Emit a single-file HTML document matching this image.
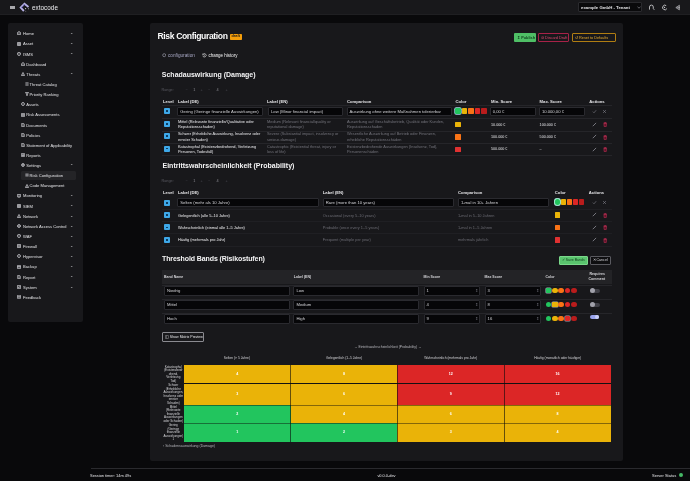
<!DOCTYPE html>
<html><head><meta charset="utf-8"><style>
html,body{margin:0;padding:0;width:690px;height:481px;overflow:hidden;background:#09090b;font-family:"Liberation Sans",sans-serif;}
body{position:relative;}
#root{position:absolute;left:0;top:0;width:690px;height:481px;will-change:transform;}
</style></head><body>
<div id="root"><div style="position:absolute;left:0px;top:0px;width:690px;height:14.8px;background:#18181b;border-bottom:0.8px solid #1f1f22;box-sizing:border-box"></div><div style="position:absolute;left:10px;top:5.6px;width:5px;height:0.75px;background:#a8a8ac"></div><div style="position:absolute;left:10px;top:7.0px;width:5px;height:0.75px;background:#a8a8ac"></div><div style="position:absolute;left:10px;top:8.4px;width:5px;height:0.75px;background:#a8a8ac"></div><svg style="position:absolute;left:0;top:0" width="34" height="14" viewBox="0 0 34 14"><path d="M28.5 6.9 L24.5 3.7 L20.7 7.6 L23.9 11.0" fill="none" stroke="#b6b0e4" stroke-width="1.9" stroke-linejoin="miter"/><circle cx="24.2" cy="5.2" r="0.75" fill="#23206a"/><circle cx="22.3" cy="7.3" r="0.75" fill="#23206a"/><circle cx="25.6" cy="8.6" r="0.6" fill="#d0d0d4"/><circle cx="28.5" cy="8.7" r="0.5" fill="#b8b8bc"/><circle cx="25.8" cy="11.2" r="0.45" fill="#9a9aa0"/></svg><div style="position:absolute;left:32px;top:5.35px;font-size:6.3px;line-height:6.3px;color:#ececef;font-weight:normal;white-space:nowrap;letter-spacing:0.05px">extocode</div><div style="position:absolute;left:577.7px;top:2.1px;width:64.1px;height:9.5px;background:#09090b;border:0.6px solid #2a2a2e;border-radius:1px;box-sizing:border-box"></div><div style="position:absolute;left:581px;top:5.85px;font-size:4.3px;line-height:4.3px;color:#e4e4e7;font-weight:bold;white-space:nowrap;">example GmbH - Tenant</div><svg style="position:absolute;left:636.5px;top:6px" width="4" height="3" viewBox="0 0 4 3"><path d="M0.5 0.8 L2 2.2 L3.5 0.8" fill="none" stroke="#a1a1aa" stroke-width="0.6"/></svg><svg style="position:absolute;left:644px;top:0" width="46" height="14" viewBox="0 0 46 14"><path d="M5.5 9.6 V7 A1.9 1.9 0 0 1 9.3 7 V8.6 L10.3 9.8" fill="none" stroke="#e4e4e7" stroke-width="0.75"/><path d="M22.2 5.6 A2.3 2.3 0 1 0 22.9 8.6" fill="none" stroke="#e4e4e7" stroke-width="0.8"/><circle cx="20.6" cy="7.3" r="0.6" fill="#e4e4e7"/><path d="M35.4 5.2 L31.8 7.6 L35.4 9.9 Z" fill="#55555a" stroke="#d4d4d8" stroke-width="0.55" stroke-linejoin="round"/><path d="M33.4 7.6 H36" stroke="#d4d4d8" stroke-width="0.45"/></svg><div style="position:absolute;left:8px;top:23px;width:75px;height:298.5px;background:#18181b;border-radius:2px"></div><svg style="position:absolute;left:16.80px;top:31.40px" width="4" height="4" viewBox="0 0 4 4"><path d="M0.4 1.6 L2 0.4 L3.6 1.6 V3.6 H0.4 Z" fill="rgba(200,200,205,0.35)" stroke="#dcdce0" stroke-width="0.6" stroke-linejoin="round"/></svg><div style="position:absolute;left:23px;top:32.25px;font-size:4.1px;line-height:4.1px;color:#e2e2e5;font-weight:normal;white-space:nowrap;">Home</div><div style="position:absolute;left:69.8px;top:31.10px;font-size:4.2px;line-height:4.2px;color:#d8d8dc;font-weight:normal;white-space:nowrap;">&#8964;</div><svg style="position:absolute;left:16.80px;top:41.54px" width="4" height="4" viewBox="0 0 4 4"><path d="M0.4 0.5 H3.6 V3.5 H0.4 Z M0.4 2 H3.6 M2 0.5 V3.5" fill="rgba(200,200,205,0.35)" stroke="#dcdce0" stroke-width="0.6" stroke-linejoin="round"/></svg><div style="position:absolute;left:23px;top:42.39px;font-size:4.1px;line-height:4.1px;color:#e2e2e5;font-weight:normal;white-space:nowrap;">Asset</div><div style="position:absolute;left:69.8px;top:41.24px;font-size:4.2px;line-height:4.2px;color:#d8d8dc;font-weight:normal;white-space:nowrap;">&#8964;</div><svg style="position:absolute;left:16.80px;top:51.68px" width="4" height="4" viewBox="0 0 4 4"><path d="M2 0.3 L3.6 1 V2.2 C3.6 3 2.8 3.5 2 3.7 C1.2 3.5 0.4 3 0.4 2.2 V1 Z" fill="rgba(200,200,205,0.35)" stroke="#dcdce0" stroke-width="0.6" stroke-linejoin="round"/></svg><div style="position:absolute;left:23px;top:52.53px;font-size:4.1px;line-height:4.1px;color:#e2e2e5;font-weight:normal;white-space:nowrap;">ISMS</div><div style="position:absolute;left:69.8px;top:52.88px;font-size:4.2px;line-height:4.2px;color:#d8d8dc;font-weight:normal;white-space:nowrap;">&#8963;</div><svg style="position:absolute;left:21.00px;top:61.82px" width="4" height="4" viewBox="0 0 4 4"><path d="M0.4 1.8 L2 0.4 L3.6 1.8 V3.6 H0.4 Z" fill="rgba(200,200,205,0.35)" stroke="#dcdce0" stroke-width="0.6" stroke-linejoin="round"/></svg><div style="position:absolute;left:26.3px;top:62.67px;font-size:4.1px;line-height:4.1px;color:#e2e2e5;font-weight:normal;white-space:nowrap;">Dashboard</div><svg style="position:absolute;left:21.00px;top:71.96px" width="4" height="4" viewBox="0 0 4 4"><path d="M2 0.4 L3.7 3.5 H0.3 Z" fill="rgba(200,200,205,0.35)" stroke="#dcdce0" stroke-width="0.6" stroke-linejoin="round"/></svg><div style="position:absolute;left:26.3px;top:72.81px;font-size:4.1px;line-height:4.1px;color:#e2e2e5;font-weight:normal;white-space:nowrap;">Threats</div><div style="position:absolute;left:69.8px;top:73.16px;font-size:4.2px;line-height:4.2px;color:#d8d8dc;font-weight:normal;white-space:nowrap;">&#8963;</div><svg style="position:absolute;left:24.70px;top:82.10px" width="4" height="4" viewBox="0 0 4 4"><path d="M0.4 0.8 H3.6 M0.4 2 H3.6 M0.4 3.2 H3.6" fill="rgba(200,200,205,0.35)" stroke="#dcdce0" stroke-width="0.6" stroke-linejoin="round"/></svg><div style="position:absolute;left:29.6px;top:82.95px;font-size:4.1px;line-height:4.1px;color:#e2e2e5;font-weight:normal;white-space:nowrap;">Threat Catalog</div><svg style="position:absolute;left:24.70px;top:92.24px" width="4" height="4" viewBox="0 0 4 4"><path d="M0.3 0.5 H3.7 L2.4 2 V3.5 H1.6 V2 Z" fill="rgba(200,200,205,0.35)" stroke="#dcdce0" stroke-width="0.6" stroke-linejoin="round"/></svg><div style="position:absolute;left:29.6px;top:93.09px;font-size:4.1px;line-height:4.1px;color:#e2e2e5;font-weight:normal;white-space:nowrap;">Priority Ranking</div><svg style="position:absolute;left:21.00px;top:102.38px" width="4" height="4" viewBox="0 0 4 4"><path d="M2 0.4 A1.6 1.6 0 1 1 1.99 0.4 Z" fill="rgba(200,200,205,0.35)" stroke="#dcdce0" stroke-width="0.6" stroke-linejoin="round"/></svg><div style="position:absolute;left:26.3px;top:103.23px;font-size:4.1px;line-height:4.1px;color:#e2e2e5;font-weight:normal;white-space:nowrap;">Assets</div><svg style="position:absolute;left:21.00px;top:112.52px" width="4" height="4" viewBox="0 0 4 4"><path d="M0.5 0.4 H3.5 V3.6 H0.5 Z M1.2 1.4 H2.8 M1.2 2.4 H2.8" fill="rgba(200,200,205,0.35)" stroke="#dcdce0" stroke-width="0.6" stroke-linejoin="round"/></svg><div style="position:absolute;left:26.3px;top:113.37px;font-size:4.1px;line-height:4.1px;color:#e2e2e5;font-weight:normal;white-space:nowrap;">Risk Assessments</div><svg style="position:absolute;left:21.00px;top:122.66px" width="4" height="4" viewBox="0 0 4 4"><path d="M0.7 0.3 H2.5 L3.3 1.1 V3.7 H0.7 Z" fill="rgba(200,200,205,0.35)" stroke="#dcdce0" stroke-width="0.6" stroke-linejoin="round"/></svg><div style="position:absolute;left:26.3px;top:123.51px;font-size:4.1px;line-height:4.1px;color:#e2e2e5;font-weight:normal;white-space:nowrap;">Documents</div><svg style="position:absolute;left:21.00px;top:132.80px" width="4" height="4" viewBox="0 0 4 4"><path d="M0.7 0.3 H2.5 L3.3 1.1 V3.7 H0.7 Z" fill="rgba(200,200,205,0.35)" stroke="#dcdce0" stroke-width="0.6" stroke-linejoin="round"/></svg><div style="position:absolute;left:26.3px;top:133.65px;font-size:4.1px;line-height:4.1px;color:#e2e2e5;font-weight:normal;white-space:nowrap;">Policies</div><svg style="position:absolute;left:21.00px;top:142.94px" width="4" height="4" viewBox="0 0 4 4"><path d="M0.7 0.3 H2.5 L3.3 1.1 V3.7 H0.7 Z" fill="rgba(200,200,205,0.35)" stroke="#dcdce0" stroke-width="0.6" stroke-linejoin="round"/></svg><div style="position:absolute;left:26.3px;top:143.79px;font-size:4.1px;line-height:4.1px;color:#e2e2e5;font-weight:normal;white-space:nowrap;">Statement of Applicability</div><svg style="position:absolute;left:21.00px;top:153.08px" width="4" height="4" viewBox="0 0 4 4"><path d="M0.6 0.3 H3.4 V3.7 H0.6 Z M1.3 2.8 V2 M2 2.8 V1.3 M2.7 2.8 V1.7" fill="rgba(200,200,205,0.35)" stroke="#dcdce0" stroke-width="0.6" stroke-linejoin="round"/></svg><div style="position:absolute;left:26.3px;top:153.93px;font-size:4.1px;line-height:4.1px;color:#e2e2e5;font-weight:normal;white-space:nowrap;">Reports</div><svg style="position:absolute;left:21.00px;top:163.22px" width="4" height="4" viewBox="0 0 4 4"><path d="M2 0.4 A1.6 1.6 0 1 1 1.99 0.4 Z M2 1.4 A0.6 0.6 0 1 1 1.99 1.4 Z" fill="rgba(200,200,205,0.35)" stroke="#dcdce0" stroke-width="0.6" stroke-linejoin="round"/></svg><div style="position:absolute;left:26.3px;top:164.07px;font-size:4.1px;line-height:4.1px;color:#e2e2e5;font-weight:normal;white-space:nowrap;">Settings</div><div style="position:absolute;left:69.8px;top:164.42px;font-size:4.2px;line-height:4.2px;color:#d8d8dc;font-weight:normal;white-space:nowrap;">&#8963;</div><div style="position:absolute;left:21.4px;top:170.56px;width:54.9px;height:9.8px;background:#242427;border-radius:1.5px"></div><svg style="position:absolute;left:24.70px;top:173.36px" width="4" height="4" viewBox="0 0 4 4"><path d="M0.4 1 H3.6 M0.4 2 H3.6 M0.4 3 H3.6" fill="rgba(200,200,205,0.35)" stroke="#dcdce0" stroke-width="0.6" stroke-linejoin="round"/></svg><div style="position:absolute;left:29.6px;top:174.21px;font-size:4.1px;line-height:4.1px;color:#e2e2e5;font-weight:normal;white-space:nowrap;">Risk Configuration</div><svg style="position:absolute;left:24.70px;top:183.50px" width="4" height="4" viewBox="0 0 4 4"><path d="M2 0.4 L3.7 3.5 H0.3 Z" fill="rgba(200,200,205,0.35)" stroke="#dcdce0" stroke-width="0.6" stroke-linejoin="round"/></svg><div style="position:absolute;left:29.6px;top:184.35px;font-size:4.1px;line-height:4.1px;color:#e2e2e5;font-weight:normal;white-space:nowrap;">Code Management</div><svg style="position:absolute;left:16.80px;top:193.64px" width="4" height="4" viewBox="0 0 4 4"><path d="M0.3 0.5 H3.7 V2.8 H0.3 Z M1.3 3.6 H2.7" fill="rgba(200,200,205,0.35)" stroke="#dcdce0" stroke-width="0.6" stroke-linejoin="round"/></svg><div style="position:absolute;left:23px;top:194.49px;font-size:4.1px;line-height:4.1px;color:#e2e2e5;font-weight:normal;white-space:nowrap;">Monitoring</div><div style="position:absolute;left:69.8px;top:193.34px;font-size:4.2px;line-height:4.2px;color:#d8d8dc;font-weight:normal;white-space:nowrap;">&#8964;</div><svg style="position:absolute;left:16.80px;top:203.78px" width="4" height="4" viewBox="0 0 4 4"><path d="M0.4 0.4 H3.6 V3.6 H0.4 Z M0.4 2 H3.6 M2 0.4 V3.6" fill="rgba(200,200,205,0.35)" stroke="#dcdce0" stroke-width="0.6" stroke-linejoin="round"/></svg><div style="position:absolute;left:23px;top:204.63px;font-size:4.1px;line-height:4.1px;color:#e2e2e5;font-weight:normal;white-space:nowrap;">SIEM</div><div style="position:absolute;left:69.8px;top:203.48px;font-size:4.2px;line-height:4.2px;color:#d8d8dc;font-weight:normal;white-space:nowrap;">&#8964;</div><svg style="position:absolute;left:16.80px;top:213.92px" width="4" height="4" viewBox="0 0 4 4"><path d="M2 0.4 L3.7 3.5 H0.3 Z" fill="rgba(200,200,205,0.35)" stroke="#dcdce0" stroke-width="0.6" stroke-linejoin="round"/></svg><div style="position:absolute;left:23px;top:214.77px;font-size:4.1px;line-height:4.1px;color:#e2e2e5;font-weight:normal;white-space:nowrap;">Network</div><div style="position:absolute;left:69.8px;top:213.62px;font-size:4.2px;line-height:4.2px;color:#d8d8dc;font-weight:normal;white-space:nowrap;">&#8964;</div><svg style="position:absolute;left:16.80px;top:224.06px" width="4" height="4" viewBox="0 0 4 4"><path d="M2 0.4 A1.6 1.6 0 1 1 1.99 0.4 Z M0.4 2 H3.6" fill="rgba(200,200,205,0.35)" stroke="#dcdce0" stroke-width="0.6" stroke-linejoin="round"/></svg><div style="position:absolute;left:23px;top:224.91px;font-size:4.1px;line-height:4.1px;color:#e2e2e5;font-weight:normal;white-space:nowrap;">Network Access Control</div><div style="position:absolute;left:69.8px;top:223.76px;font-size:4.2px;line-height:4.2px;color:#d8d8dc;font-weight:normal;white-space:nowrap;">&#8964;</div><svg style="position:absolute;left:16.80px;top:234.20px" width="4" height="4" viewBox="0 0 4 4"><path d="M2 0.3 L3.6 1 V2.2 C3.6 3 2.8 3.5 2 3.7 C1.2 3.5 0.4 3 0.4 2.2 V1 Z" fill="rgba(200,200,205,0.35)" stroke="#dcdce0" stroke-width="0.6" stroke-linejoin="round"/></svg><div style="position:absolute;left:23px;top:235.05px;font-size:4.1px;line-height:4.1px;color:#e2e2e5;font-weight:normal;white-space:nowrap;">WAF</div><div style="position:absolute;left:69.8px;top:233.90px;font-size:4.2px;line-height:4.2px;color:#d8d8dc;font-weight:normal;white-space:nowrap;">&#8964;</div><svg style="position:absolute;left:16.80px;top:244.34px" width="4" height="4" viewBox="0 0 4 4"><path d="M0.3 0.5 H3.7 V3.5 H0.3 Z M0.3 2 H3.7" fill="rgba(200,200,205,0.35)" stroke="#dcdce0" stroke-width="0.6" stroke-linejoin="round"/></svg><div style="position:absolute;left:23px;top:245.19px;font-size:4.1px;line-height:4.1px;color:#e2e2e5;font-weight:normal;white-space:nowrap;">Firewall</div><div style="position:absolute;left:69.8px;top:244.04px;font-size:4.2px;line-height:4.2px;color:#d8d8dc;font-weight:normal;white-space:nowrap;">&#8964;</div><svg style="position:absolute;left:16.80px;top:254.48px" width="4" height="4" viewBox="0 0 4 4"><path d="M2 0.4 A1.6 1.6 0 1 1 1.99 0.4 Z" fill="rgba(200,200,205,0.35)" stroke="#dcdce0" stroke-width="0.6" stroke-linejoin="round"/></svg><div style="position:absolute;left:23px;top:255.33px;font-size:4.1px;line-height:4.1px;color:#e2e2e5;font-weight:normal;white-space:nowrap;">Hypervisor</div><div style="position:absolute;left:69.8px;top:254.18px;font-size:4.2px;line-height:4.2px;color:#d8d8dc;font-weight:normal;white-space:nowrap;">&#8964;</div><svg style="position:absolute;left:16.80px;top:264.62px" width="4" height="4" viewBox="0 0 4 4"><path d="M0.5 0.4 H3.5 V3.6 H0.5 Z M0.5 1.6 H3.5" fill="rgba(200,200,205,0.35)" stroke="#dcdce0" stroke-width="0.6" stroke-linejoin="round"/></svg><div style="position:absolute;left:23px;top:265.47px;font-size:4.1px;line-height:4.1px;color:#e2e2e5;font-weight:normal;white-space:nowrap;">Backup</div><div style="position:absolute;left:69.8px;top:264.32px;font-size:4.2px;line-height:4.2px;color:#d8d8dc;font-weight:normal;white-space:nowrap;">&#8964;</div><svg style="position:absolute;left:16.80px;top:274.76px" width="4" height="4" viewBox="0 0 4 4"><path d="M0.7 0.3 H2.5 L3.3 1.1 V3.7 H0.7 Z" fill="rgba(200,200,205,0.35)" stroke="#dcdce0" stroke-width="0.6" stroke-linejoin="round"/></svg><div style="position:absolute;left:23px;top:275.61px;font-size:4.1px;line-height:4.1px;color:#e2e2e5;font-weight:normal;white-space:nowrap;">Report</div><div style="position:absolute;left:69.8px;top:274.46px;font-size:4.2px;line-height:4.2px;color:#d8d8dc;font-weight:normal;white-space:nowrap;">&#8964;</div><svg style="position:absolute;left:16.80px;top:284.90px" width="4" height="4" viewBox="0 0 4 4"><path d="M0.4 0.4 H3.6 V3.6 H0.4 Z M1 2 L1.8 2.7 L3 1.2" fill="rgba(200,200,205,0.35)" stroke="#dcdce0" stroke-width="0.6" stroke-linejoin="round"/></svg><div style="position:absolute;left:23px;top:285.75px;font-size:4.1px;line-height:4.1px;color:#e2e2e5;font-weight:normal;white-space:nowrap;">System</div><div style="position:absolute;left:69.8px;top:284.60px;font-size:4.2px;line-height:4.2px;color:#d8d8dc;font-weight:normal;white-space:nowrap;">&#8964;</div><svg style="position:absolute;left:16.80px;top:295.04px" width="4" height="4" viewBox="0 0 4 4"><path d="M0.3 0.7 H3.7 V3.3 H0.3 Z M0.3 0.7 L2 2.1 L3.7 0.7" fill="rgba(200,200,205,0.35)" stroke="#dcdce0" stroke-width="0.6" stroke-linejoin="round"/></svg><div style="position:absolute;left:23px;top:295.89px;font-size:4.1px;line-height:4.1px;color:#e2e2e5;font-weight:normal;white-space:nowrap;">Feedback</div><div style="position:absolute;left:150px;top:22.5px;width:473px;height:438px;background:#18181b;border-radius:2px"></div><div style="position:absolute;left:157.5px;top:31.30px;font-size:8.6px;line-height:10px;color:#fafafa;font-weight:bold;white-space:nowrap;letter-spacing:-0.38px">Risk Configuration</div><div style="position:absolute;left:229.8px;top:33.8px;width:12.5px;height:5.8px;background:#f59e0b;border-radius:0.8px"></div><div style="position:absolute;left:231.5px;top:34.90px;font-size:3.8px;line-height:3.8px;color:#1c1917;font-weight:bold;white-space:nowrap;">draft</div><div style="position:absolute;left:514px;top:33.2px;width:22.3px;height:8.7px;background:#4fbf66;border-radius:1px"></div><div style="position:absolute;left:517.2px;top:37.00px;font-size:3.8px;line-height:3.8px;color:#0f3d1c;font-weight:bold;white-space:nowrap;">&#8613; Publish</div><div style="position:absolute;left:538px;top:33.2px;width:31.3px;height:8.7px;border:0.6px solid #a82248;border-radius:1px;box-sizing:border-box"></div><div style="position:absolute;left:541px;top:37.00px;font-size:3.8px;line-height:3.8px;color:#e04870;font-weight:normal;white-space:nowrap;">&#8856; Discard Draft</div><div style="position:absolute;left:571.6px;top:33.2px;width:44.2px;height:8.7px;border:0.6px solid #b07d12;border-radius:1px;box-sizing:border-box"></div><div style="position:absolute;left:575px;top:37.00px;font-size:3.8px;line-height:3.8px;color:#e8ac30;font-weight:normal;white-space:nowrap;">&#8634; Reset to Defaults</div><svg style="position:absolute;left:161.5px;top:53.3px" width="4.4" height="4.4" viewBox="0 0 4.4 4.4"><circle cx="2.2" cy="2.2" r="1.5" fill="none" stroke="#9898a8" stroke-width="0.7"/></svg><div style="position:absolute;left:168px;top:54.15px;font-size:4.7px;line-height:4.7px;color:#a8a8c4;font-weight:normal;white-space:nowrap;">configuration</div><svg style="position:absolute;left:202.3px;top:53.2px" width="4.6" height="4.6" viewBox="0 0 4.6 4.6"><path d="M1 1.4 A1.7 1.7 0 1 1 0.8 2.8" fill="none" stroke="#e4e4e7" stroke-width="0.65"/><path d="M0.6 0.6 V1.7 H1.7" fill="none" stroke="#e4e4e7" stroke-width="0.55"/><path d="M2.3 1.4 V2.4 L3 2.9" fill="none" stroke="#e4e4e7" stroke-width="0.5"/></svg><div style="position:absolute;left:208.5px;top:54.27px;font-size:4.45px;line-height:4.45px;color:#f4f4f5;font-weight:normal;white-space:nowrap;">change history</div><div style="position:absolute;left:161.8px;top:71.00px;font-size:7px;line-height:8px;color:#f4f4f5;font-weight:bold;white-space:nowrap;">Schadauswirkung (Damage)</div><div style="position:absolute;left:161.5px;top:89.00px;font-size:3.8px;line-height:3.8px;color:#5a5a62;font-weight:normal;white-space:nowrap;">Range:</div><div style="position:absolute;left:185.5px;top:89.00px;font-size:3.8px;line-height:3.8px;color:#4a4a52;font-weight:normal;white-space:nowrap;">&minus;</div><div style="position:absolute;left:193.3px;top:89.00px;font-size:3.8px;line-height:3.8px;color:#8a8a92;font-weight:normal;white-space:nowrap;">1</div><div style="position:absolute;left:200.5px;top:89.00px;font-size:3.8px;line-height:3.8px;color:#4a4a52;font-weight:normal;white-space:nowrap;">+</div><div style="position:absolute;left:208px;top:89.00px;font-size:3.8px;line-height:3.8px;color:#4a4a52;font-weight:normal;white-space:nowrap;">&minus;</div><div style="position:absolute;left:216.5px;top:89.00px;font-size:3.8px;line-height:3.8px;color:#8a8a92;font-weight:normal;white-space:nowrap;">4</div><div style="position:absolute;left:225.5px;top:89.00px;font-size:3.8px;line-height:3.8px;color:#4a4a52;font-weight:normal;white-space:nowrap;">+</div><div style="position:absolute;left:163px;top:99.50px;font-size:4.2px;line-height:4.2px;color:#e4e4e7;font-weight:bold;white-space:nowrap;">Level</div><div style="position:absolute;left:178px;top:99.50px;font-size:4.2px;line-height:4.2px;color:#e4e4e7;font-weight:bold;white-space:nowrap;">Label (DE)</div><div style="position:absolute;left:267px;top:99.50px;font-size:4.2px;line-height:4.2px;color:#e4e4e7;font-weight:bold;white-space:nowrap;">Label (EN)</div><div style="position:absolute;left:347px;top:99.50px;font-size:4.2px;line-height:4.2px;color:#e4e4e7;font-weight:bold;white-space:nowrap;">Comparison</div><div style="position:absolute;left:455.5px;top:99.50px;font-size:4.2px;line-height:4.2px;color:#e4e4e7;font-weight:bold;white-space:nowrap;">Color</div><div style="position:absolute;left:491px;top:99.50px;font-size:4.2px;line-height:4.2px;color:#e4e4e7;font-weight:bold;white-space:nowrap;">Min. Score</div><div style="position:absolute;left:539.6px;top:99.50px;font-size:4.2px;line-height:4.2px;color:#e4e4e7;font-weight:bold;white-space:nowrap;">Max. Score</div><div style="position:absolute;left:589.3px;top:99.50px;font-size:4.2px;line-height:4.2px;color:#e4e4e7;font-weight:bold;white-space:nowrap;">Actions</div><div style="position:absolute;left:162px;top:105.3px;width:450px;height:0.5px;background:#252529"></div><div style="position:absolute;left:164px;top:108.2px;width:6.2px;height:6.2px;background:#3ea8e8;border-radius:0.9px"></div><div style="position:absolute;left:166.4px;top:110.4px;width:1.5px;height:1.8px;background:#0c3a5e;border-radius:0.3px"></div><div style="position:absolute;left:177.3px;top:106.5px;width:85.5px;height:9.5px;background:#060608;border:0.5px solid #2a2a2f;border-radius:1px;box-sizing:border-box"></div><div style="position:absolute;left:180.3px;top:109.85px;font-size:4.2px;line-height:4.2px;color:#d4d4d8;font-weight:normal;white-space:nowrap;">Gering (Geringe finanzielle Auswirkungen)</div><div style="position:absolute;left:268px;top:106.5px;width:75px;height:9.5px;background:#060608;border:0.5px solid #2a2a2f;border-radius:1px;box-sizing:border-box"></div><div style="position:absolute;left:271px;top:109.85px;font-size:4.2px;line-height:4.2px;color:#d4d4d8;font-weight:normal;white-space:nowrap;">Low (Minor financial impact)</div><div style="position:absolute;left:346.5px;top:106.5px;width:105.5px;height:9.5px;background:#060608;border:0.5px solid #2a2a2f;border-radius:1px;box-sizing:border-box"></div><div style="position:absolute;left:349.5px;top:109.85px;font-size:4.2px;line-height:4.2px;color:#d4d4d8;font-weight:normal;white-space:nowrap;">Auswirkung ohne weitere Ma&szlig;nahmen tolerierbar</div><div style="position:absolute;left:455.4px;top:108.3px;width:5.5px;height:5.5px;background:#22c55e;border-radius:0.8px;border-radius:1.2px;box-shadow:0 0 0 0.7px #a5d8e6"></div><div style="position:absolute;left:461.9px;top:108.3px;width:5.5px;height:5.5px;background:#eab308;border-radius:0.8px"></div><div style="position:absolute;left:468.4px;top:108.3px;width:5.5px;height:5.5px;background:#f97316;border-radius:0.8px"></div><div style="position:absolute;left:474.9px;top:108.3px;width:5.5px;height:5.5px;background:#dc2626;border-radius:0.8px"></div><div style="position:absolute;left:481.4px;top:108.3px;width:5.5px;height:5.5px;background:#b91c1c;border-radius:0.8px"></div><div style="position:absolute;left:489.8px;top:106.5px;width:46.2px;height:9.5px;background:#060608;border:0.5px solid #2a2a2f;border-radius:1px;box-sizing:border-box"></div><div style="position:absolute;left:492.8px;top:109.85px;font-size:4.2px;line-height:4.2px;color:#d4d4d8;font-weight:normal;white-space:nowrap;">0,00 &euro;</div><div style="position:absolute;left:538.9px;top:106.5px;width:45.9px;height:9.5px;background:#060608;border:0.5px solid #2a2a2f;border-radius:1px;box-sizing:border-box"></div><div style="position:absolute;left:541.9px;top:109.85px;font-size:4.2px;line-height:4.2px;color:#d4d4d8;font-weight:normal;white-space:nowrap;">10.000,00 &euro;</div><svg style="position:absolute;left:591.5px;top:108.80px" width="5" height="5" viewBox="0 0 5 5"><path d="M0.8 2.6 L2 3.8 L4.2 1.2" fill="none" stroke="#8a8a92" stroke-width="0.55"/></svg><svg style="position:absolute;left:602px;top:108.80px" width="5" height="5" viewBox="0 0 5 5"><path d="M1 1 L4 4 M4 1 L1 4" fill="none" stroke="#8a8a92" stroke-width="0.55"/></svg><div style="position:absolute;left:162px;top:118px;width:450px;height:0.5px;background:#252529"></div><div style="position:absolute;left:164px;top:120.80000000000001px;width:6.2px;height:6.2px;background:#3ea8e8;border-radius:0.9px"></div><div style="position:absolute;left:166.4px;top:123.00000000000001px;width:1.5px;height:1.8px;background:#0c3a5e;border-radius:0.3px"></div><div style="position:absolute;left:178px;top:119.85px;font-size:3.9px;line-height:3.9px;color:#ececef;font-weight:normal;white-space:nowrap;">Mittel (Relevante finanzielle/Qualitative oder</div><div style="position:absolute;left:178px;top:125.25px;font-size:3.9px;line-height:3.9px;color:#ececef;font-weight:normal;white-space:nowrap;">Reputationsschaden)</div><div style="position:absolute;left:267px;top:119.85px;font-size:3.9px;line-height:3.9px;color:#74747c;font-weight:normal;white-space:nowrap;">Medium (Relevant financial/quality or</div><div style="position:absolute;left:267px;top:125.25px;font-size:3.9px;line-height:3.9px;color:#74747c;font-weight:normal;white-space:nowrap;">reputational damage)</div><div style="position:absolute;left:347px;top:119.85px;font-size:3.9px;line-height:3.9px;color:#74747c;font-weight:normal;white-space:nowrap;">Auswirkung auf Gesch&auml;ftsbetrieb, Qualit&auml;t oder Kunden,</div><div style="position:absolute;left:347px;top:125.25px;font-size:3.9px;line-height:3.9px;color:#74747c;font-weight:normal;white-space:nowrap;">Reputationsschaden</div><div style="position:absolute;left:455px;top:121.80000000000001px;width:5.5px;height:5.5px;background:#eab308;border-radius:0.5px"></div><div style="position:absolute;left:491px;top:123.55px;font-size:3.7px;line-height:3.7px;color:#e4e4e7;font-weight:normal;white-space:nowrap;">10.000 &euro;</div><div style="position:absolute;left:539.6px;top:123.55px;font-size:3.7px;line-height:3.7px;color:#e4e4e7;font-weight:normal;white-space:nowrap;">100.000 &euro;</div><svg style="position:absolute;left:591.8px;top:122.00px" width="5" height="5" viewBox="0 0 5 5"><path d="M0.9 4.1 L4.1 0.9" fill="none" stroke="#a1a1aa" stroke-width="0.7"/><path d="M0.7 4.3 L1.2 3.6" stroke="#71717a" stroke-width="0.5"/></svg><svg style="position:absolute;left:602.70px;top:122.20px" width="4.4" height="5" viewBox="0 0 4.4 5"><path d="M0.4 1.1 H4 M1.6 1.1 V0.5 H2.8 V1.1 M0.9 1.5 L1.1 4.5 H3.3 L3.5 1.5 Z" fill="#5a1326" stroke="#c8325a" stroke-width="0.55"/></svg><div style="position:absolute;left:162px;top:130.5px;width:450px;height:0.5px;background:#252529"></div><div style="position:absolute;left:164px;top:133.20000000000002px;width:6.2px;height:6.2px;background:#3ea8e8;border-radius:0.9px"></div><div style="position:absolute;left:166.4px;top:135.4px;width:1.5px;height:1.8px;background:#0c3a5e;border-radius:0.3px"></div><div style="position:absolute;left:178px;top:132.25px;font-size:3.9px;line-height:3.9px;color:#ececef;font-weight:normal;white-space:nowrap;">Schwer (Erhebliche Auswirkung, Insolvenz oder</div><div style="position:absolute;left:178px;top:137.65px;font-size:3.9px;line-height:3.9px;color:#ececef;font-weight:normal;white-space:nowrap;">ernster Schaden)</div><div style="position:absolute;left:267px;top:132.25px;font-size:3.9px;line-height:3.9px;color:#74747c;font-weight:normal;white-space:nowrap;">Severe (Substantial impact, insolvency or</div><div style="position:absolute;left:267px;top:137.65px;font-size:3.9px;line-height:3.9px;color:#74747c;font-weight:normal;white-space:nowrap;">serious damage)</div><div style="position:absolute;left:347px;top:132.25px;font-size:3.9px;line-height:3.9px;color:#74747c;font-weight:normal;white-space:nowrap;">Wesentliche Auswirkung auf Betrieb oder Finanzen,</div><div style="position:absolute;left:347px;top:137.65px;font-size:3.9px;line-height:3.9px;color:#74747c;font-weight:normal;white-space:nowrap;">erhebliche Reputationssch&auml;den</div><div style="position:absolute;left:455px;top:134.20000000000002px;width:5.5px;height:5.5px;background:#f97316;border-radius:0.5px"></div><div style="position:absolute;left:491px;top:135.95px;font-size:3.7px;line-height:3.7px;color:#e4e4e7;font-weight:normal;white-space:nowrap;">100.000 &euro;</div><div style="position:absolute;left:539.6px;top:135.95px;font-size:3.7px;line-height:3.7px;color:#e4e4e7;font-weight:normal;white-space:nowrap;">500.000 &euro;</div><svg style="position:absolute;left:591.8px;top:134.40px" width="5" height="5" viewBox="0 0 5 5"><path d="M0.9 4.1 L4.1 0.9" fill="none" stroke="#a1a1aa" stroke-width="0.7"/><path d="M0.7 4.3 L1.2 3.6" stroke="#71717a" stroke-width="0.5"/></svg><svg style="position:absolute;left:602.70px;top:134.60px" width="4.4" height="5" viewBox="0 0 4.4 5"><path d="M0.4 1.1 H4 M1.6 1.1 V0.5 H2.8 V1.1 M0.9 1.5 L1.1 4.5 H3.3 L3.5 1.5 Z" fill="#5a1326" stroke="#c8325a" stroke-width="0.55"/></svg><div style="position:absolute;left:162px;top:142.9px;width:450px;height:0.5px;background:#252529"></div><div style="position:absolute;left:164px;top:145.5px;width:6.2px;height:6.2px;background:#3ea8e8;border-radius:0.9px"></div><div style="position:absolute;left:166.4px;top:147.7px;width:1.5px;height:1.8px;background:#0c3a5e;border-radius:0.3px"></div><div style="position:absolute;left:178px;top:144.55px;font-size:3.9px;line-height:3.9px;color:#ececef;font-weight:normal;white-space:nowrap;">Katastrophal (Existenzbedrohend, Verletzung</div><div style="position:absolute;left:178px;top:149.95px;font-size:3.9px;line-height:3.9px;color:#ececef;font-weight:normal;white-space:nowrap;">Personen, Todesfall)</div><div style="position:absolute;left:267px;top:144.55px;font-size:3.9px;line-height:3.9px;color:#74747c;font-weight:normal;white-space:nowrap;">Catastrophic (Existential threat, injury or</div><div style="position:absolute;left:267px;top:149.95px;font-size:3.9px;line-height:3.9px;color:#74747c;font-weight:normal;white-space:nowrap;">loss of life)</div><div style="position:absolute;left:347px;top:144.55px;font-size:3.9px;line-height:3.9px;color:#74747c;font-weight:normal;white-space:nowrap;">Existenzbedrohende Auswirkungen (Insolvenz, Tod),</div><div style="position:absolute;left:347px;top:149.95px;font-size:3.9px;line-height:3.9px;color:#74747c;font-weight:normal;white-space:nowrap;">Personensch&auml;den</div><div style="position:absolute;left:455px;top:146.5px;width:5.5px;height:5.5px;background:#e03131;border-radius:0.5px"></div><div style="position:absolute;left:491px;top:148.25px;font-size:3.7px;line-height:3.7px;color:#e4e4e7;font-weight:normal;white-space:nowrap;">500.000 &euro;</div><div style="position:absolute;left:539.6px;top:148.25px;font-size:3.7px;line-height:3.7px;color:#e4e4e7;font-weight:normal;white-space:nowrap;">&ndash;</div><svg style="position:absolute;left:591.8px;top:146.70px" width="5" height="5" viewBox="0 0 5 5"><path d="M0.9 4.1 L4.1 0.9" fill="none" stroke="#a1a1aa" stroke-width="0.7"/><path d="M0.7 4.3 L1.2 3.6" stroke="#71717a" stroke-width="0.5"/></svg><svg style="position:absolute;left:602.70px;top:146.90px" width="4.4" height="5" viewBox="0 0 4.4 5"><path d="M0.4 1.1 H4 M1.6 1.1 V0.5 H2.8 V1.1 M0.9 1.5 L1.1 4.5 H3.3 L3.5 1.5 Z" fill="#5a1326" stroke="#c8325a" stroke-width="0.55"/></svg><div style="position:absolute;left:162px;top:155.2px;width:450px;height:0.5px;background:#252529"></div><div style="position:absolute;left:162.5px;top:162.00px;font-size:7px;line-height:8px;color:#f4f4f5;font-weight:bold;white-space:nowrap;">Eintrittswahrscheinlichkeit (Probability)</div><div style="position:absolute;left:161.5px;top:180.40px;font-size:3.8px;line-height:3.8px;color:#5a5a62;font-weight:normal;white-space:nowrap;">Range:</div><div style="position:absolute;left:185.5px;top:180.40px;font-size:3.8px;line-height:3.8px;color:#4a4a52;font-weight:normal;white-space:nowrap;">&minus;</div><div style="position:absolute;left:193.3px;top:180.40px;font-size:3.8px;line-height:3.8px;color:#8a8a92;font-weight:normal;white-space:nowrap;">1</div><div style="position:absolute;left:200.5px;top:180.40px;font-size:3.8px;line-height:3.8px;color:#4a4a52;font-weight:normal;white-space:nowrap;">+</div><div style="position:absolute;left:208px;top:180.40px;font-size:3.8px;line-height:3.8px;color:#4a4a52;font-weight:normal;white-space:nowrap;">&minus;</div><div style="position:absolute;left:216.5px;top:180.40px;font-size:3.8px;line-height:3.8px;color:#8a8a92;font-weight:normal;white-space:nowrap;">4</div><div style="position:absolute;left:225.5px;top:180.40px;font-size:3.8px;line-height:3.8px;color:#4a4a52;font-weight:normal;white-space:nowrap;">+</div><div style="position:absolute;left:163px;top:191.10px;font-size:4.2px;line-height:4.2px;color:#e4e4e7;font-weight:bold;white-space:nowrap;">Level</div><div style="position:absolute;left:178px;top:191.10px;font-size:4.2px;line-height:4.2px;color:#e4e4e7;font-weight:bold;white-space:nowrap;">Label (DE)</div><div style="position:absolute;left:322.8px;top:191.10px;font-size:4.2px;line-height:4.2px;color:#e4e4e7;font-weight:bold;white-space:nowrap;">Label (EN)</div><div style="position:absolute;left:457.9px;top:191.10px;font-size:4.2px;line-height:4.2px;color:#e4e4e7;font-weight:bold;white-space:nowrap;">Comparison</div><div style="position:absolute;left:554.8px;top:191.10px;font-size:4.2px;line-height:4.2px;color:#e4e4e7;font-weight:bold;white-space:nowrap;">Color</div><div style="position:absolute;left:588.8px;top:191.10px;font-size:4.2px;line-height:4.2px;color:#e4e4e7;font-weight:bold;white-space:nowrap;">Actions</div><div style="position:absolute;left:164px;top:199.6px;width:6.2px;height:6.2px;background:#3ea8e8;border-radius:0.9px"></div><div style="position:absolute;left:166.4px;top:201.79999999999998px;width:1.5px;height:1.8px;background:#0c3a5e;border-radius:0.3px"></div><div style="position:absolute;left:177.3px;top:197.8px;width:141.5px;height:9.4px;background:#060608;border:0.5px solid #2a2a2f;border-radius:1px;box-sizing:border-box"></div><div style="position:absolute;left:180.3px;top:201.10px;font-size:4.2px;line-height:4.2px;color:#d4d4d8;font-weight:normal;white-space:nowrap;">Selten (mehr als 10 Jahre)</div><div style="position:absolute;left:322.8px;top:197.8px;width:131px;height:9.4px;background:#060608;border:0.5px solid #2a2a2f;border-radius:1px;box-sizing:border-box"></div><div style="position:absolute;left:325.8px;top:201.10px;font-size:4.2px;line-height:4.2px;color:#d4d4d8;font-weight:normal;white-space:nowrap;">Rare (more than 10 years)</div><div style="position:absolute;left:457.9px;top:197.8px;width:91.4px;height:9.4px;background:#060608;border:0.5px solid #2a2a2f;border-radius:1px;box-sizing:border-box"></div><div style="position:absolute;left:460.9px;top:201.10px;font-size:4.2px;line-height:4.2px;color:#d4d4d8;font-weight:normal;white-space:nowrap;">1-mal in 10+ Jahren</div><div style="position:absolute;left:554.5px;top:199.4px;width:5.9px;height:5.9px;background:#22c55e;border-radius:0.8px;border-radius:1.2px;box-shadow:0 0 0 0.7px #a5d8e6"></div><div style="position:absolute;left:560.5px;top:199.4px;width:5.9px;height:5.9px;background:#eab308;border-radius:0.8px"></div><div style="position:absolute;left:566.5px;top:199.4px;width:5.9px;height:5.9px;background:#f97316;border-radius:0.8px"></div><div style="position:absolute;left:572.5px;top:199.4px;width:5.9px;height:5.9px;background:#dc2626;border-radius:0.8px"></div><div style="position:absolute;left:578.5px;top:199.4px;width:5.9px;height:5.9px;background:#b91c1c;border-radius:0.8px"></div><div style="position:absolute;left:554.5px;top:199.4px;width:5.9px;height:5.9px;background:#22c55e;border-radius:50%;box-shadow:0 0 0 0.8px #a7f3d0"></div><svg style="position:absolute;left:591.5px;top:199.90px" width="5" height="5" viewBox="0 0 5 5"><path d="M0.8 2.6 L2 3.8 L4.2 1.2" fill="none" stroke="#8a8a92" stroke-width="0.55"/></svg><svg style="position:absolute;left:602px;top:199.90px" width="5" height="5" viewBox="0 0 5 5"><path d="M1 1 L4 4 M4 1 L1 4" fill="none" stroke="#8a8a92" stroke-width="0.55"/></svg><div style="position:absolute;left:162px;top:209.4px;width:450px;height:0.4px;background:#1f1f23"></div><div style="position:absolute;left:164px;top:211.8px;width:6.2px;height:6.2px;background:#3ea8e8;border-radius:0.9px"></div><div style="position:absolute;left:166.4px;top:214.0px;width:1.5px;height:1.8px;background:#0c3a5e;border-radius:0.3px"></div><div style="position:absolute;left:178px;top:213.55px;font-size:3.9px;line-height:3.9px;color:#f0f0f2;font-weight:normal;white-space:nowrap;">Gelegentlich (alle 5&ndash;10 Jahre)</div><div style="position:absolute;left:322.8px;top:213.55px;font-size:3.9px;line-height:3.9px;color:#6b6b73;font-weight:normal;white-space:nowrap;">Occasional (every 5&ndash;10 years)</div><div style="position:absolute;left:457.9px;top:213.55px;font-size:3.9px;line-height:3.9px;color:#6b6b73;font-weight:normal;white-space:nowrap;">1-mal in 5&ndash;10 Jahren</div><div style="position:absolute;left:554.5px;top:212.20000000000002px;width:5.8px;height:5.8px;background:#eab308;border-radius:0.5px"></div><svg style="position:absolute;left:591.8px;top:212.40px" width="5" height="5" viewBox="0 0 5 5"><path d="M0.9 4.1 L4.1 0.9" fill="none" stroke="#a1a1aa" stroke-width="0.7"/><path d="M0.7 4.3 L1.2 3.6" stroke="#71717a" stroke-width="0.5"/></svg><svg style="position:absolute;left:602.70px;top:212.60px" width="4.4" height="5" viewBox="0 0 4.4 5"><path d="M0.4 1.1 H4 M1.6 1.1 V0.5 H2.8 V1.1 M0.9 1.5 L1.1 4.5 H3.3 L3.5 1.5 Z" fill="#5a1326" stroke="#c8325a" stroke-width="0.55"/></svg><div style="position:absolute;left:162px;top:220.8px;width:450px;height:0.4px;background:#1f1f23"></div><div style="position:absolute;left:164px;top:224.3px;width:6.2px;height:6.2px;background:#3ea8e8;border-radius:0.9px"></div><div style="position:absolute;left:166.4px;top:226.5px;width:1.5px;height:1.8px;background:#0c3a5e;border-radius:0.3px"></div><div style="position:absolute;left:178px;top:226.05px;font-size:3.9px;line-height:3.9px;color:#f0f0f2;font-weight:normal;white-space:nowrap;">Wahrscheinlich (einmal alle 1&ndash;5 Jahre)</div><div style="position:absolute;left:322.8px;top:226.05px;font-size:3.9px;line-height:3.9px;color:#6b6b73;font-weight:normal;white-space:nowrap;">Probable (once every 1&ndash;5 years)</div><div style="position:absolute;left:457.9px;top:226.05px;font-size:3.9px;line-height:3.9px;color:#6b6b73;font-weight:normal;white-space:nowrap;">1-mal in 1&ndash;5 Jahren</div><div style="position:absolute;left:554.5px;top:224.70000000000002px;width:5.8px;height:5.8px;background:#f97316;border-radius:0.5px"></div><svg style="position:absolute;left:591.8px;top:224.90px" width="5" height="5" viewBox="0 0 5 5"><path d="M0.9 4.1 L4.1 0.9" fill="none" stroke="#a1a1aa" stroke-width="0.7"/><path d="M0.7 4.3 L1.2 3.6" stroke="#71717a" stroke-width="0.5"/></svg><svg style="position:absolute;left:602.70px;top:225.10px" width="4.4" height="5" viewBox="0 0 4.4 5"><path d="M0.4 1.1 H4 M1.6 1.1 V0.5 H2.8 V1.1 M0.9 1.5 L1.1 4.5 H3.3 L3.5 1.5 Z" fill="#5a1326" stroke="#c8325a" stroke-width="0.55"/></svg><div style="position:absolute;left:162px;top:233.3px;width:450px;height:0.4px;background:#1f1f23"></div><div style="position:absolute;left:164px;top:236.7px;width:6.2px;height:6.2px;background:#3ea8e8;border-radius:0.9px"></div><div style="position:absolute;left:166.4px;top:238.89999999999998px;width:1.5px;height:1.8px;background:#0c3a5e;border-radius:0.3px"></div><div style="position:absolute;left:178px;top:238.45px;font-size:3.9px;line-height:3.9px;color:#f0f0f2;font-weight:normal;white-space:nowrap;">H&auml;ufig (mehrmals pro Jahr)</div><div style="position:absolute;left:322.8px;top:238.45px;font-size:3.9px;line-height:3.9px;color:#6b6b73;font-weight:normal;white-space:nowrap;">Frequent (multiple per year)</div><div style="position:absolute;left:457.9px;top:238.45px;font-size:3.9px;line-height:3.9px;color:#6b6b73;font-weight:normal;white-space:nowrap;">mehrmals j&auml;hrlich</div><div style="position:absolute;left:554.5px;top:237.1px;width:5.8px;height:5.8px;background:#e03131;border-radius:0.5px"></div><svg style="position:absolute;left:591.8px;top:237.30px" width="5" height="5" viewBox="0 0 5 5"><path d="M0.9 4.1 L4.1 0.9" fill="none" stroke="#a1a1aa" stroke-width="0.7"/><path d="M0.7 4.3 L1.2 3.6" stroke="#71717a" stroke-width="0.5"/></svg><svg style="position:absolute;left:602.70px;top:237.50px" width="4.4" height="5" viewBox="0 0 4.4 5"><path d="M0.4 1.1 H4 M1.6 1.1 V0.5 H2.8 V1.1 M0.9 1.5 L1.1 4.5 H3.3 L3.5 1.5 Z" fill="#5a1326" stroke="#c8325a" stroke-width="0.55"/></svg><div style="position:absolute;left:162px;top:245.7px;width:450px;height:0.4px;background:#1f1f23"></div><div style="position:absolute;left:162px;top:254.80px;font-size:7px;line-height:8px;color:#f4f4f5;font-weight:bold;white-space:nowrap;letter-spacing:-0.1px">Threshold Bands (Risikostufen)</div><div style="position:absolute;left:559px;top:255.6px;width:29px;height:9.3px;background:#5ac46e;border:0.5px solid #7ad88a;border-radius:1px;box-sizing:border-box"></div><div style="position:absolute;left:561.8px;top:258.85px;font-size:3.5px;line-height:3.5px;color:#0f3d1c;font-weight:normal;white-space:nowrap;">&#10003; Save Bands</div><div style="position:absolute;left:589.5px;top:255.6px;width:21.3px;height:9.3px;background:#0e0e10;border:0.5px solid #5a5a60;border-radius:1px;box-sizing:border-box"></div><div style="position:absolute;left:592.5px;top:258.80px;font-size:3.6px;line-height:3.6px;color:#d4d4d8;font-weight:normal;white-space:nowrap;">&#10005; Cancel</div><div style="position:absolute;left:161.5px;top:270px;width:450px;height:13.6px;background:#232326"></div><div style="position:absolute;left:164px;top:275.85px;font-size:3.5px;line-height:3.5px;color:#d4d4d8;font-weight:bold;white-space:nowrap;">Band Name</div><div style="position:absolute;left:293.8px;top:275.85px;font-size:3.5px;line-height:3.5px;color:#d4d4d8;font-weight:bold;white-space:nowrap;">Label (EN)</div><div style="position:absolute;left:423.5px;top:275.85px;font-size:3.5px;line-height:3.5px;color:#d4d4d8;font-weight:bold;white-space:nowrap;">Min Score</div><div style="position:absolute;left:484.6px;top:275.85px;font-size:3.5px;line-height:3.5px;color:#d4d4d8;font-weight:bold;white-space:nowrap;">Max Score</div><div style="position:absolute;left:545.5px;top:275.85px;font-size:3.5px;line-height:3.5px;color:#d4d4d8;font-weight:bold;white-space:nowrap;">Color</div><div style="position:absolute;left:589.5px;top:273.00px;font-size:3.6px;line-height:3.6px;color:#d4d4d8;font-weight:bold;white-space:nowrap;">Requires</div><div style="position:absolute;left:588.5px;top:277.80px;font-size:3.6px;line-height:3.6px;color:#d4d4d8;font-weight:bold;white-space:nowrap;">Comment</div><div style="position:absolute;left:161.5px;top:284.70000000000005px;width:450px;height:0.5px;background:#26262a"></div><div style="position:absolute;left:164px;top:285.6px;width:125.5px;height:10px;background:#060608;border:0.5px solid #2a2a2f;border-radius:1px;box-sizing:border-box"></div><div style="position:absolute;left:167px;top:289.20px;font-size:4.2px;line-height:4.2px;color:#d4d4d8;font-weight:normal;white-space:nowrap;">Niedrig</div><div style="position:absolute;left:293.4px;top:285.6px;width:126px;height:10px;background:#060608;border:0.5px solid #2a2a2f;border-radius:1px;box-sizing:border-box"></div><div style="position:absolute;left:296.4px;top:289.20px;font-size:4.2px;line-height:4.2px;color:#d4d4d8;font-weight:normal;white-space:nowrap;">Low</div><div style="position:absolute;left:423.5px;top:285.6px;width:56.5px;height:10px;background:#060608;border:0.5px solid #2a2a2f;border-radius:1px;box-sizing:border-box"></div><div style="position:absolute;left:426.5px;top:289.20px;font-size:4.2px;line-height:4.2px;color:#d4d4d8;font-weight:normal;white-space:nowrap;">1</div><div style="position:absolute;left:475px;top:288.60px;font-size:4px;line-height:4px;color:#71717a;font-weight:normal;white-space:nowrap;">&#8661;</div><div style="position:absolute;left:484.6px;top:285.6px;width:56.3px;height:10px;background:#060608;border:0.5px solid #2a2a2f;border-radius:1px;box-sizing:border-box"></div><div style="position:absolute;left:487.6px;top:289.20px;font-size:4.2px;line-height:4.2px;color:#d4d4d8;font-weight:normal;white-space:nowrap;">3</div><div style="position:absolute;left:536px;top:288.60px;font-size:4px;line-height:4px;color:#71717a;font-weight:normal;white-space:nowrap;">&#8661;</div><div style="position:absolute;left:545.5px;top:287.6px;width:5.8px;height:5.8px;background:#22c55e;border-radius:1px;box-shadow:0 0 0 0.6px #9ca3af"></div><div style="position:absolute;left:551.85px;top:287.6px;width:5.8px;height:5.8px;background:#eab308;border-radius:50%"></div><div style="position:absolute;left:558.2px;top:287.6px;width:5.8px;height:5.8px;background:#f97316;border-radius:50%"></div><div style="position:absolute;left:564.55px;top:287.6px;width:5.8px;height:5.8px;background:#dc2626;border-radius:50%"></div><div style="position:absolute;left:570.9px;top:287.6px;width:5.8px;height:5.8px;background:#b91c1c;border-radius:50%"></div><div style="position:absolute;left:589.5px;top:288.6px;width:10px;height:4.2px;background:#3f3f46;border-radius:3px"></div><div style="position:absolute;left:589.5px;top:288.20000000000005px;width:5px;height:5px;background:#a1a1aa;border-radius:50%"></div><div style="position:absolute;left:161.5px;top:298.70000000000005px;width:450px;height:0.5px;background:#26262a"></div><div style="position:absolute;left:164px;top:299.6px;width:125.5px;height:10px;background:#060608;border:0.5px solid #2a2a2f;border-radius:1px;box-sizing:border-box"></div><div style="position:absolute;left:167px;top:303.20px;font-size:4.2px;line-height:4.2px;color:#d4d4d8;font-weight:normal;white-space:nowrap;">Mittel</div><div style="position:absolute;left:293.4px;top:299.6px;width:126px;height:10px;background:#060608;border:0.5px solid #2a2a2f;border-radius:1px;box-sizing:border-box"></div><div style="position:absolute;left:296.4px;top:303.20px;font-size:4.2px;line-height:4.2px;color:#d4d4d8;font-weight:normal;white-space:nowrap;">Medium</div><div style="position:absolute;left:423.5px;top:299.6px;width:56.5px;height:10px;background:#060608;border:0.5px solid #2a2a2f;border-radius:1px;box-sizing:border-box"></div><div style="position:absolute;left:426.5px;top:303.20px;font-size:4.2px;line-height:4.2px;color:#d4d4d8;font-weight:normal;white-space:nowrap;">4</div><div style="position:absolute;left:475px;top:302.60px;font-size:4px;line-height:4px;color:#71717a;font-weight:normal;white-space:nowrap;">&#8661;</div><div style="position:absolute;left:484.6px;top:299.6px;width:56.3px;height:10px;background:#060608;border:0.5px solid #2a2a2f;border-radius:1px;box-sizing:border-box"></div><div style="position:absolute;left:487.6px;top:303.20px;font-size:4.2px;line-height:4.2px;color:#d4d4d8;font-weight:normal;white-space:nowrap;">8</div><div style="position:absolute;left:536px;top:302.60px;font-size:4px;line-height:4px;color:#71717a;font-weight:normal;white-space:nowrap;">&#8661;</div><div style="position:absolute;left:545.5px;top:301.6px;width:5.8px;height:5.8px;background:#22c55e;border-radius:50%"></div><div style="position:absolute;left:551.85px;top:301.6px;width:5.8px;height:5.8px;background:#eab308;border-radius:1px;box-shadow:0 0 0 0.6px #9ca3af"></div><div style="position:absolute;left:558.2px;top:301.6px;width:5.8px;height:5.8px;background:#f97316;border-radius:50%"></div><div style="position:absolute;left:564.55px;top:301.6px;width:5.8px;height:5.8px;background:#dc2626;border-radius:50%"></div><div style="position:absolute;left:570.9px;top:301.6px;width:5.8px;height:5.8px;background:#b91c1c;border-radius:50%"></div><div style="position:absolute;left:589.5px;top:302.6px;width:10px;height:4.2px;background:#3f3f46;border-radius:3px"></div><div style="position:absolute;left:589.5px;top:302.20000000000005px;width:5px;height:5px;background:#a1a1aa;border-radius:50%"></div><div style="position:absolute;left:161.5px;top:312.6px;width:450px;height:0.5px;background:#26262a"></div><div style="position:absolute;left:164px;top:313.5px;width:125.5px;height:10px;background:#060608;border:0.5px solid #2a2a2f;border-radius:1px;box-sizing:border-box"></div><div style="position:absolute;left:167px;top:317.10px;font-size:4.2px;line-height:4.2px;color:#d4d4d8;font-weight:normal;white-space:nowrap;">Hoch</div><div style="position:absolute;left:293.4px;top:313.5px;width:126px;height:10px;background:#060608;border:0.5px solid #2a2a2f;border-radius:1px;box-sizing:border-box"></div><div style="position:absolute;left:296.4px;top:317.10px;font-size:4.2px;line-height:4.2px;color:#d4d4d8;font-weight:normal;white-space:nowrap;">High</div><div style="position:absolute;left:423.5px;top:313.5px;width:56.5px;height:10px;background:#060608;border:0.5px solid #2a2a2f;border-radius:1px;box-sizing:border-box"></div><div style="position:absolute;left:426.5px;top:317.10px;font-size:4.2px;line-height:4.2px;color:#d4d4d8;font-weight:normal;white-space:nowrap;">9</div><div style="position:absolute;left:475px;top:316.50px;font-size:4px;line-height:4px;color:#71717a;font-weight:normal;white-space:nowrap;">&#8661;</div><div style="position:absolute;left:484.6px;top:313.5px;width:56.3px;height:10px;background:#060608;border:0.5px solid #2a2a2f;border-radius:1px;box-sizing:border-box"></div><div style="position:absolute;left:487.6px;top:317.10px;font-size:4.2px;line-height:4.2px;color:#d4d4d8;font-weight:normal;white-space:nowrap;">16</div><div style="position:absolute;left:536px;top:316.50px;font-size:4px;line-height:4px;color:#71717a;font-weight:normal;white-space:nowrap;">&#8661;</div><div style="position:absolute;left:545.5px;top:315.5px;width:5.8px;height:5.8px;background:#22c55e;border-radius:50%"></div><div style="position:absolute;left:551.85px;top:315.5px;width:5.8px;height:5.8px;background:#eab308;border-radius:50%"></div><div style="position:absolute;left:558.2px;top:315.5px;width:5.8px;height:5.8px;background:#f97316;border-radius:50%"></div><div style="position:absolute;left:564.55px;top:315.5px;width:5.8px;height:5.8px;background:#dc2626;border-radius:1px;box-shadow:0 0 0 0.6px #9ca3af"></div><div style="position:absolute;left:570.9px;top:315.5px;width:5.8px;height:5.8px;background:#b91c1c;border-radius:50%"></div><div style="position:absolute;left:589.7px;top:315.1px;width:9.8px;height:4.4px;background:#9aa4ee;border-radius:3px"></div><div style="position:absolute;left:595.2px;top:315.2px;width:4.2px;height:4.2px;background:#c8cef6;border-radius:50%"></div><div style="position:absolute;left:162.2px;top:332.4px;width:41.6px;height:10px;border:0.5px solid #8a8a90;border-radius:1px;box-sizing:border-box"></div><div style="position:absolute;left:164.8px;top:336.23px;font-size:3.55px;line-height:3.55px;color:#e4e4e7;font-weight:normal;white-space:nowrap;">&#9707; Show Matrix Preview</div><div style="position:absolute;left:354px;top:346.47px;font-size:3.45px;line-height:3.45px;color:#b4b4ba;font-weight:normal;white-space:nowrap;">&rarr; Eintrittswahrscheinlichkeit (Probability) &rarr;</div><div style="position:absolute;left:136.90px;width:200px;text-align:center;top:357.35px;font-size:3.3px;line-height:3.3px;color:#d4d4d8;font-weight:normal;white-space:nowrap;">Selten (&gt; 5 Jahre)</div><div style="position:absolute;left:244.05px;width:200px;text-align:center;top:357.35px;font-size:3.3px;line-height:3.3px;color:#d4d4d8;font-weight:normal;white-space:nowrap;">Gelegentlich (1&ndash;5 Jahre)</div><div style="position:absolute;left:350.70px;width:200px;text-align:center;top:357.35px;font-size:3.3px;line-height:3.3px;color:#d4d4d8;font-weight:normal;white-space:nowrap;">Wahrscheinlich (mehrmals pro Jahr)</div><div style="position:absolute;left:457.70px;width:200px;text-align:center;top:357.35px;font-size:3.3px;line-height:3.3px;color:#d4d4d8;font-weight:normal;white-space:nowrap;">H&auml;ufig (monatlich oder h&auml;ufiger)</div><div style="position:absolute;left:183.8px;top:365.2px;width:106.80000000000001px;height:18.30000000000001px;background:#eab308"></div><div style="position:absolute;left:222.20px;width:30px;text-align:center;top:372.85px;font-size:3.6px;line-height:3.6px;color:#ffffff;font-weight:bold;white-space:nowrap;">4</div><div style="position:absolute;left:290.6px;top:365.2px;width:106.79999999999995px;height:18.30000000000001px;background:#eab308"></div><div style="position:absolute;left:329.00px;width:30px;text-align:center;top:372.85px;font-size:3.6px;line-height:3.6px;color:#ffffff;font-weight:bold;white-space:nowrap;">8</div><div style="position:absolute;left:397.4px;top:365.2px;width:106.80000000000001px;height:18.30000000000001px;background:#dc2626"></div><div style="position:absolute;left:435.80px;width:30px;text-align:center;top:372.85px;font-size:3.6px;line-height:3.6px;color:#ffffff;font-weight:bold;white-space:nowrap;">12</div><div style="position:absolute;left:504.2px;top:365.2px;width:106.80000000000001px;height:18.30000000000001px;background:#dc2626"></div><div style="position:absolute;left:542.60px;width:30px;text-align:center;top:372.85px;font-size:3.6px;line-height:3.6px;color:#ffffff;font-weight:bold;white-space:nowrap;">16</div><div style="position:absolute;left:163.30px;width:20px;text-align:center;top:365.85px;font-size:3.0px;line-height:3.0px;color:#d4d4d8;font-weight:normal;white-space:nowrap;">Katastrophal</div><div style="position:absolute;left:163.30px;width:20px;text-align:center;top:369.35px;font-size:3.0px;line-height:3.0px;color:#d4d4d8;font-weight:normal;white-space:nowrap;">(Existenzbedr</div><div style="position:absolute;left:163.30px;width:20px;text-align:center;top:372.85px;font-size:3.0px;line-height:3.0px;color:#d4d4d8;font-weight:normal;white-space:nowrap;">ohend,</div><div style="position:absolute;left:163.30px;width:20px;text-align:center;top:376.35px;font-size:3.0px;line-height:3.0px;color:#d4d4d8;font-weight:normal;white-space:nowrap;">Verletzung</div><div style="position:absolute;left:163.30px;width:20px;text-align:center;top:379.85px;font-size:3.0px;line-height:3.0px;color:#d4d4d8;font-weight:normal;white-space:nowrap;">Tod)</div><div style="position:absolute;left:183.8px;top:383.5px;width:106.80000000000001px;height:21.69999999999999px;background:#eab308"></div><div style="position:absolute;left:222.20px;width:30px;text-align:center;top:392.85px;font-size:3.6px;line-height:3.6px;color:#ffffff;font-weight:bold;white-space:nowrap;">3</div><div style="position:absolute;left:290.6px;top:383.5px;width:106.79999999999995px;height:21.69999999999999px;background:#eab308"></div><div style="position:absolute;left:329.00px;width:30px;text-align:center;top:392.85px;font-size:3.6px;line-height:3.6px;color:#ffffff;font-weight:bold;white-space:nowrap;">6</div><div style="position:absolute;left:397.4px;top:383.5px;width:106.80000000000001px;height:21.69999999999999px;background:#dc2626"></div><div style="position:absolute;left:435.80px;width:30px;text-align:center;top:392.85px;font-size:3.6px;line-height:3.6px;color:#ffffff;font-weight:bold;white-space:nowrap;">9</div><div style="position:absolute;left:504.2px;top:383.5px;width:106.80000000000001px;height:21.69999999999999px;background:#dc2626"></div><div style="position:absolute;left:542.60px;width:30px;text-align:center;top:392.85px;font-size:3.6px;line-height:3.6px;color:#ffffff;font-weight:bold;white-space:nowrap;">12</div><div style="position:absolute;left:163.30px;width:20px;text-align:center;top:384.10px;font-size:3.0px;line-height:3.0px;color:#d4d4d8;font-weight:normal;white-space:nowrap;">Schwer</div><div style="position:absolute;left:163.30px;width:20px;text-align:center;top:387.60px;font-size:3.0px;line-height:3.0px;color:#d4d4d8;font-weight:normal;white-space:nowrap;">(Erhebliche</div><div style="position:absolute;left:163.30px;width:20px;text-align:center;top:391.10px;font-size:3.0px;line-height:3.0px;color:#d4d4d8;font-weight:normal;white-space:nowrap;">Auswirkungen,</div><div style="position:absolute;left:163.30px;width:20px;text-align:center;top:394.60px;font-size:3.0px;line-height:3.0px;color:#d4d4d8;font-weight:normal;white-space:nowrap;">Insolvenz oder</div><div style="position:absolute;left:163.30px;width:20px;text-align:center;top:398.10px;font-size:3.0px;line-height:3.0px;color:#d4d4d8;font-weight:normal;white-space:nowrap;">ernster</div><div style="position:absolute;left:163.30px;width:20px;text-align:center;top:401.60px;font-size:3.0px;line-height:3.0px;color:#d4d4d8;font-weight:normal;white-space:nowrap;">Schaden)</div><div style="position:absolute;left:183.8px;top:405.2px;width:106.80000000000001px;height:18.100000000000023px;background:#22c55e"></div><div style="position:absolute;left:222.20px;width:30px;text-align:center;top:412.75px;font-size:3.6px;line-height:3.6px;color:#ffffff;font-weight:bold;white-space:nowrap;">2</div><div style="position:absolute;left:290.6px;top:405.2px;width:106.79999999999995px;height:18.100000000000023px;background:#eab308"></div><div style="position:absolute;left:329.00px;width:30px;text-align:center;top:412.75px;font-size:3.6px;line-height:3.6px;color:#ffffff;font-weight:bold;white-space:nowrap;">4</div><div style="position:absolute;left:397.4px;top:405.2px;width:106.80000000000001px;height:18.100000000000023px;background:#eab308"></div><div style="position:absolute;left:435.80px;width:30px;text-align:center;top:412.75px;font-size:3.6px;line-height:3.6px;color:#ffffff;font-weight:bold;white-space:nowrap;">6</div><div style="position:absolute;left:504.2px;top:405.2px;width:106.80000000000001px;height:18.100000000000023px;background:#eab308"></div><div style="position:absolute;left:542.60px;width:30px;text-align:center;top:412.75px;font-size:3.6px;line-height:3.6px;color:#ffffff;font-weight:bold;white-space:nowrap;">8</div><div style="position:absolute;left:163.30px;width:20px;text-align:center;top:405.75px;font-size:3.0px;line-height:3.0px;color:#d4d4d8;font-weight:normal;white-space:nowrap;">Mittel</div><div style="position:absolute;left:163.30px;width:20px;text-align:center;top:409.25px;font-size:3.0px;line-height:3.0px;color:#d4d4d8;font-weight:normal;white-space:nowrap;">(Relevante</div><div style="position:absolute;left:163.30px;width:20px;text-align:center;top:412.75px;font-size:3.0px;line-height:3.0px;color:#d4d4d8;font-weight:normal;white-space:nowrap;">finanzielle</div><div style="position:absolute;left:163.30px;width:20px;text-align:center;top:416.25px;font-size:3.0px;line-height:3.0px;color:#d4d4d8;font-weight:normal;white-space:nowrap;">Auswirkungen</div><div style="position:absolute;left:163.30px;width:20px;text-align:center;top:419.75px;font-size:3.0px;line-height:3.0px;color:#d4d4d8;font-weight:normal;white-space:nowrap;">oder Schaden)</div><div style="position:absolute;left:183.8px;top:423.3px;width:106.80000000000001px;height:18.399999999999977px;background:#22c55e"></div><div style="position:absolute;left:222.20px;width:30px;text-align:center;top:431.00px;font-size:3.6px;line-height:3.6px;color:#ffffff;font-weight:bold;white-space:nowrap;">1</div><div style="position:absolute;left:290.6px;top:423.3px;width:106.79999999999995px;height:18.399999999999977px;background:#22c55e"></div><div style="position:absolute;left:329.00px;width:30px;text-align:center;top:431.00px;font-size:3.6px;line-height:3.6px;color:#ffffff;font-weight:bold;white-space:nowrap;">2</div><div style="position:absolute;left:397.4px;top:423.3px;width:106.80000000000001px;height:18.399999999999977px;background:#eab308"></div><div style="position:absolute;left:435.80px;width:30px;text-align:center;top:431.00px;font-size:3.6px;line-height:3.6px;color:#ffffff;font-weight:bold;white-space:nowrap;">3</div><div style="position:absolute;left:504.2px;top:423.3px;width:106.80000000000001px;height:18.399999999999977px;background:#eab308"></div><div style="position:absolute;left:542.60px;width:30px;text-align:center;top:431.00px;font-size:3.6px;line-height:3.6px;color:#ffffff;font-weight:bold;white-space:nowrap;">4</div><div style="position:absolute;left:163.30px;width:20px;text-align:center;top:424.00px;font-size:3.0px;line-height:3.0px;color:#d4d4d8;font-weight:normal;white-space:nowrap;">Gering</div><div style="position:absolute;left:163.30px;width:20px;text-align:center;top:427.50px;font-size:3.0px;line-height:3.0px;color:#d4d4d8;font-weight:normal;white-space:nowrap;">(Geringe</div><div style="position:absolute;left:163.30px;width:20px;text-align:center;top:431.00px;font-size:3.0px;line-height:3.0px;color:#d4d4d8;font-weight:normal;white-space:nowrap;">finanzielle</div><div style="position:absolute;left:163.30px;width:20px;text-align:center;top:434.50px;font-size:3.0px;line-height:3.0px;color:#d4d4d8;font-weight:normal;white-space:nowrap;">Auswirkungen)</div><div style="position:absolute;left:163.30px;width:20px;text-align:center;top:438.00px;font-size:3.0px;line-height:3.0px;color:#d4d4d8;font-weight:normal;white-space:nowrap;">1</div><div style="position:absolute;left:183.8px;top:383.0px;width:427.2px;height:1px;background:rgba(10,10,12,0.45)"></div><div style="position:absolute;left:183.8px;top:404.7px;width:427.2px;height:1px;background:rgba(10,10,12,0.45)"></div><div style="position:absolute;left:183.8px;top:422.8px;width:427.2px;height:1px;background:rgba(10,10,12,0.45)"></div><div style="position:absolute;left:290.1px;top:365.2px;width:1px;height:76.5px;background:rgba(10,10,12,0.6)"></div><div style="position:absolute;left:396.9px;top:365.2px;width:1px;height:76.5px;background:rgba(10,10,12,0.6)"></div><div style="position:absolute;left:503.7px;top:365.2px;width:1px;height:76.5px;background:rgba(10,10,12,0.6)"></div><div style="position:absolute;left:162.5px;top:445.05px;font-size:3.5px;line-height:3.5px;color:#b4b4ba;font-weight:normal;white-space:nowrap;">&uarr; Schadensauswirkung (Damage)</div><div style="position:absolute;left:91px;top:468.3px;width:599px;height:0.6px;background:#2a2a2e"></div><div style="position:absolute;left:90px;top:473.52px;font-size:3.95px;line-height:3.95px;color:#e4e4e7;font-weight:normal;white-space:nowrap;">Session timer: 14m 49s</div><div style="position:absolute;left:377.4px;top:473.55px;font-size:3.9px;line-height:3.9px;color:#e4e4e7;font-weight:normal;white-space:nowrap;">v0.0.0-dev</div><div style="position:absolute;left:652px;top:473.50px;font-size:4.0px;line-height:4.0px;color:#e4e4e7;font-weight:normal;white-space:nowrap;">Server Status</div><div style="position:absolute;left:678.8px;top:473.4px;width:3.8px;height:3.8px;background:#45b865;border-radius:50%"></div></div>
</body></html>
